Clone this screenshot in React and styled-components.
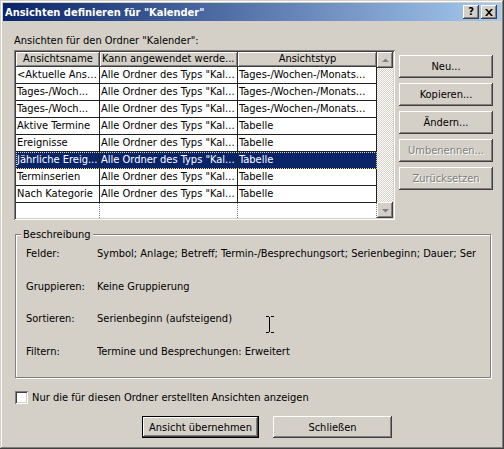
import React from 'react';
import styled, { createGlobalStyle, css } from 'styled-components';

const Global = createGlobalStyle`
  html, body {
    margin: 0;
    padding: 0;
    background: #d4d0c8;
  }
  body {
    font-family: "DejaVu Sans Condensed", "Liberation Sans", Arial, sans-serif;
    font-size: 11px;
    color: #000;
  }
`;

const raised = css`
  background: #d4d0c8;
  box-shadow:
    inset -1px -1px #404040,
    inset 1px 1px #ffffff,
    inset -2px -2px #808080,
    inset 2px 2px #d4d0c8;
`;

const Window = styled.div`
  position: relative;
  width: 504px;
  height: 449px;
  box-sizing: border-box;
  padding: 3px;
  background: #d4d0c8;
  box-shadow:
    inset -1px -1px #404040,
    inset 1px 1px #d4d0c8,
    inset -2px -2px #808080,
    inset 2px 2px #ffffff;
  overflow: hidden;
`;

const TitleBar = styled.div`
  height: 18px;
  display: flex;
  align-items: center;
  padding: 0 4px 0 2px;
  background: linear-gradient(to right, #0a246a, #a6caf0);
  color: #fff;
  font-weight: bold;
  font-size: 11px;
`;

const Title = styled.div`
  flex: 1;
  white-space: nowrap;
`;

const TitleButtons = styled.div`
  display: flex;
  gap: 2px;
`;

const CaptionButton = styled.div`
  ${raised};
  width: 16px;
  height: 14px;
  display: flex;
  align-items: center;
  justify-content: center;
  color: #000;
  font-weight: bold;
  font-size: 11px;
  line-height: 14px;
`;

const Body = styled.div`
  padding: 0 8px 0 11px;
`;

const Top = styled.div`
  display: flex;
  align-items: flex-start;
`;

const LeftCol = styled.div`
  width: 381px;
`;

const Label = styled.div`
  margin-top: 13px;
  line-height: 13px;
  height: 13px;
  white-space: nowrap;
`;

const ListBox = styled.div`
  margin-top: 3px;
  height: 170px;
  box-sizing: border-box;
  padding: 2px;
  background: #fff;
  display: flex;
  box-shadow:
    inset 1px 1px #808080,
    inset -1px -1px #ffffff,
    inset 2px 2px #404040,
    inset -2px -2px #d4d0c8;
`;

const Columns = styled.div`
  flex: 1;
  display: flex;
  flex-direction: column;
`;

const grid = css`
  display: grid;
  grid-template-columns: 84px 138px 139px;
`;

const HeaderRow = styled.div`
  ${grid};
  height: 15px;
`;

const HeaderCell = styled.div`
  ${raised};
  box-shadow:
    inset -1px -1px #404040,
    inset 1px 1px #ffffff,
    inset -2px -2px #808080;
  line-height: 14px;
  padding: 0 3px 0 ${(p) => (p.$left ? 2 : 3)}px;
  text-align: ${(p) => (p.$left ? 'left' : 'center')};
  white-space: nowrap;
  overflow: hidden;
`;

const Row = styled.div`
  ${grid};
  height: 17px;
  box-sizing: border-box;
  border-bottom: 1px solid #202020;
  background: ${(p) => (p.$selected ? '#0a246a' : '#fff')};
  color: ${(p) => (p.$selected ? '#fff' : '#000')};
  ${(p) =>
    p.$selected &&
    css`
      outline: 1px dotted #d8d8a0;
      outline-offset: -1px;
    `}
`;

const Cell = styled.div`
  border-right: 1px solid #202020;
  line-height: 16px;
  padding-left: 1px;
  white-space: nowrap;
  overflow: hidden;
  text-overflow: ellipsis;
`;

const FillerRow = styled.div`
  ${grid};
  flex: 1;
`;

const FillerCell = styled.div`
  border-right: 1px dotted #808080;
`;

const ScrollBar = styled.div`
  width: 16px;
  display: flex;
  flex-direction: column;
  justify-content: space-between;
  background-image: repeating-conic-gradient(#ffffff 0% 25%, #d4d0c8 0% 50%);
  background-size: 2px 2px;
`;

const ScrollButton = styled.div`
  ${raised};
  width: 16px;
  height: 16px;
  display: flex;
  align-items: center;
  justify-content: center;
`;

const RightCol = styled.div`
  margin-left: 4px;
  padding-top: 34px;
  display: flex;
  flex-direction: column;
  gap: 5px;
`;

const Button = styled.div`
  ${raised};
  width: ${(p) => p.$w || 94}px;
  height: ${(p) => p.$h || 23}px;
  box-sizing: border-box;
  display: flex;
  align-items: center;
  justify-content: center;
  white-space: nowrap;
  color: ${(p) => (p.$disabled ? '#808080' : '#000')};
  text-shadow: ${(p) => (p.$disabled ? '1px 1px 0 #ffffff' : 'none')};
  ${(p) =>
    p.$default &&
    css`
      box-shadow:
        inset 0 0 0 1px #000000,
        inset -2px -2px #404040,
        inset 2px 2px #ffffff,
        inset -3px -3px #808080;
    `}
`;

const GroupBox = styled.div`
  position: relative;
  margin: 14px 0 0 1px;
  width: 476px;
  height: 144px;
  box-sizing: border-box;
  border: 1px solid #808080;
  box-shadow: inset 1px 1px #ffffff, 1px 1px #ffffff;
  padding: 12px 14px 0 10px;
`;

const Legend = styled.div`
  position: absolute;
  top: -7px;
  left: 5px;
  padding: 0 2px;
  line-height: 13px;
  background: #d4d0c8;
`;

const Details = styled.div`
  display: grid;
  grid-template-columns: 71px 1fr;
  row-gap: 19.5px;
  line-height: 13px;
`;

const Term = styled.div`
  white-space: nowrap;
`;

const Value = styled.div`
  white-space: nowrap;
  overflow: hidden;
`;

const CheckRow = styled.label`
  margin: 13px 0 0 1px;
  display: flex;
  align-items: center;
  gap: 4px;
  height: 13px;
  line-height: 13px;
`;

const CheckBox = styled.span`
  width: 13px;
  height: 13px;
  box-sizing: border-box;
  background: #fff;
  box-shadow:
    inset 1px 1px #808080,
    inset -1px -1px #ffffff,
    inset 2px 2px #404040,
    inset -2px -2px #d4d0c8;
`;

const ButtonRow = styled.div`
  margin: 12px 0 0 128px;
  display: flex;
  gap: 14px;
`;

const Cursor = styled.svg`
  position: absolute;
  left: 266px;
  top: 316px;
`;

const rows = [
  ['<Aktuelle Ansi...', 'Alle Ordner des Typs "Kal...', 'Tages-/Wochen-/Monats...'],
  ['Tages-/Woch...', 'Alle Ordner des Typs "Kal...', 'Tages-/Wochen-/Monats...'],
  ['Tages-/Woch...', 'Alle Ordner des Typs "Kal...', 'Tages-/Wochen-/Monats...'],
  ['Aktive Termine', 'Alle Ordner des Typs "Kal...', 'Tabelle'],
  ['Ereignisse', 'Alle Ordner des Typs "Kal...', 'Tabelle'],
  ['Jährliche Ereig...', 'Alle Ordner des Typs "Kal...', 'Tabelle'],
  ['Terminserien', 'Alle Ordner des Typs "Kal...', 'Tabelle'],
  ['Nach Kategorie', 'Alle Ordner des Typs "Kal...', 'Tabelle'],
];

const details = [
  ['Felder:', 'Symbol; Anlage; Betreff; Termin-/Besprechungsort; Serienbeginn; Dauer; Serienmuster'],
  ['Gruppieren:', 'Keine Gruppierung'],
  ['Sortieren:', 'Serienbeginn (aufsteigend)'],
  ['Filtern:', 'Termine und Besprechungen: Erweitert'],
];

function Arrow({ down }) {
  return (
    <svg width="7" height="5" viewBox="0 0 7 5">
      <path
        d={down ? 'M0 1h7L3.5 4.5z' : 'M0 4h7L3.5 0.5z'}
        fill="#808080"
      />
    </svg>
  );
}

export default function App() {
  return (
    <>
      <Global />
      <Window>
        <TitleBar>
          <Title>Ansichten definieren für "Kalender"</Title>
          <TitleButtons>
            <CaptionButton>?</CaptionButton>
            <CaptionButton>
              <svg width="8" height="7" viewBox="0 0 8 7">
                <path d="M0 0h2l2 2.2L6 0h2L5 3.5 8 7H6L4 4.8 2 7H0l3-3.5z" fill="#000" />
              </svg>
            </CaptionButton>
          </TitleButtons>
        </TitleBar>

        <Body>
          <Top>
            <LeftCol>
              <Label>Ansichten für den Ordner "Kalender":</Label>
              <ListBox>
                <Columns>
                  <HeaderRow>
                    <HeaderCell>Ansichtsname</HeaderCell>
                    <HeaderCell $left>Kann angewendet werde...</HeaderCell>
                    <HeaderCell>Ansichtstyp</HeaderCell>
                  </HeaderRow>
                  {rows.map((r, i) => (
                    <Row key={i} $selected={i === 5}>
                      {r.map((c, j) => (
                        <Cell key={j}>{c}</Cell>
                      ))}
                    </Row>
                  ))}
                  <FillerRow>
                    <FillerCell />
                    <FillerCell />
                    <FillerCell />
                  </FillerRow>
                </Columns>
                <ScrollBar>
                  <ScrollButton>
                    <Arrow />
                  </ScrollButton>
                  <ScrollButton>
                    <Arrow down />
                  </ScrollButton>
                </ScrollBar>
              </ListBox>
            </LeftCol>
            <RightCol>
              <Button>Neu...</Button>
              <Button>Kopieren...</Button>
              <Button>Ändern...</Button>
              <Button $disabled>Umbenennen...</Button>
              <Button $disabled>Zurücksetzen</Button>
            </RightCol>
          </Top>

          <GroupBox>
            <Legend>Beschreibung</Legend>
            <Details>
              {details.map(([t, v]) => (
                <React.Fragment key={t}>
                  <Term>{t}</Term>
                  <Value>{v}</Value>
                </React.Fragment>
              ))}
            </Details>
          </GroupBox>

          <CheckRow>
            <CheckBox />
            Nur die für diesen Ordner erstellten Ansichten anzeigen
          </CheckRow>

          <ButtonRow>
            <Button $default $w={117} $h={22}>Ansicht übernehmen</Button>
            <Button $w={119} $h={22}>Schließen</Button>
          </ButtonRow>
        </Body>

        <Cursor width="8" height="17" viewBox="0 0 8 17">
          <path d="M0 0.5h3M5 0.5h3M3.5 1v15M0 16.5h3M5 16.5h3" stroke="#000" strokeWidth="1" fill="none" />
        </Cursor>
      </Window>
    </>
  );
}
